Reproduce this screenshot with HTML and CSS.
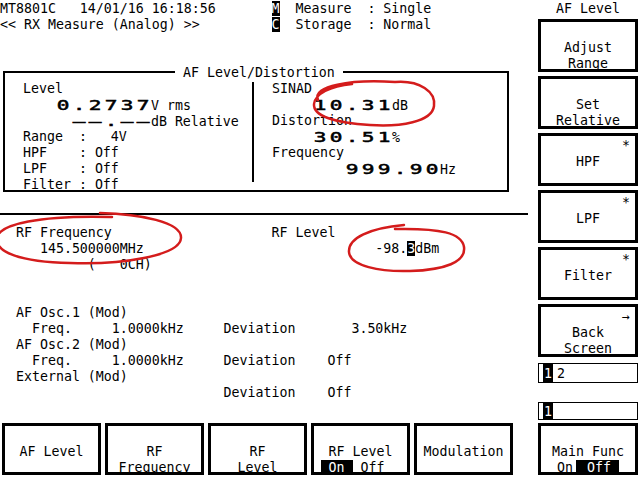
FILE: index.html
```html
<!DOCTYPE html>
<html>
<head>
<meta charset="utf-8">
<link rel="stylesheet" href="styles.css">
</head>
<body>
<div class="screen">
  <div class="main">
    <div class="hdr">
      <div class="line">MT8801C   14/01/16 16:18:56       <span class="inv">M</span>  Measure  : Single</div>
      <div class="line">&lt;&lt; RX Measure (Analog) &gt;&gt;         <span class="inv">C</span>  Storage  : Normal</div>
    </div>
    <fieldset class="box">
      <legend>AF Level/Distortion</legend>
      <div class="afbody">
        <div class="col-l">
          <div class="line">Level</div>
          <div class="line">    <span class="big"><i>0</i><i>.</i><i>2</i><i>7</i><i>3</i><i>7</i></span>V rms</div>
          <div class="line">      <span class="big"><i>—</i><i>—</i><i>.</i><i>—</i><i>—</i></span>dB Relative</div>
          <div class="line">Range  :   4V</div>
          <div class="line">HPF    : Off</div>
          <div class="line">LPF    : Off</div>
          <div class="line">Filter : Off</div>
        </div>
        <div class="vdiv"></div>
        <div class="col-r">
          <div class="line">SINAD</div>
          <div class="line">     <span class="big"><i>1</i><i>0</i><i>.</i><i>3</i><i>1</i></span>dB</div>
          <div class="line">Distortion</div>
          <div class="line">     <span class="big"><i>3</i><i>0</i><i>.</i><i>5</i><i>1</i></span>%</div>
          <div class="line">Frequency</div>
          <div class="line">         <span class="big"><i>9</i><i>9</i><i>9</i><i>.</i><i>9</i><i>0</i></span>Hz</div>
        </div>
      </div>
    </fieldset>
    <div class="rule"></div>
    <div class="rf">
      <div class="line">  RF Frequency                    RF Level</div>
      <div class="line">     145.500000MHz                             -98.<span class="inv">3</span>dBm</div>
      <div class="line">           (   0CH)</div>
    </div>
    <div class="mod">
      <div class="line">  AF Osc.1 (Mod)</div>
      <div class="line">    Freq.     1.0000kHz     Deviation       3.50kHz</div>
      <div class="line">  AF Osc.2 (Mod)</div>
      <div class="line">    Freq.     1.0000kHz     Deviation    Off</div>
      <div class="line">  External (Mod)</div>
      <div class="line">                            Deviation    Off</div>
    </div>
  </div>

  <div class="side">
    <div class="side-title">AF Level</div>
    <div class="btn"><div class="mark"></div><div>Adjust</div><div>Range</div></div>
    <div class="btn"><div class="mark"></div><div>Set</div><div>Relative</div></div>
    <div class="btn"><div class="mark">*</div><div>HPF</div></div>
    <div class="btn"><div class="mark">*</div><div>LPF</div></div>
    <div class="btn"><div class="mark">*</div><div>Filter</div></div>
    <div class="btn"><div class="mark">→</div><div>Back</div><div>Screen</div></div>
    <div class="page page-a"><span class="pg-on">1</span><span class="pg">2</span></div>
    <div class="page page-b"><span class="pg-on">1</span></div>
  </div>

  <div class="bottom-l">
    <div class="btn bbtn"><div class="mark"></div><div>AF Level</div></div>
    <div class="btn bbtn"><div class="mark"></div><div>RF</div><div>Frequency</div></div>
    <div class="btn bbtn"><div class="mark"></div><div>RF</div><div>Level</div></div>
    <div class="btn bbtn"><div class="mark"></div><div>RF Level</div><div class="onoff"><span class="inv"> On </span> Off  </div></div>
    <div class="btn bbtn"><div class="mark"></div><div>Modulation</div></div>
  </div>
  <div class="bottom-r">
    <div class="btn bbtn"><div class="mark"></div><div>Main Func</div><div class="onoff">On<span class="inv off"> Off </span></div></div>
  </div>

  <svg class="marks" width="640" height="480" viewBox="0 0 640 480">
    <path d="M318 100 C312 86, 350 79, 395 82 C420 80, 436 92, 434 106 C432 122, 400 127, 370 125 C335 123, 313 116, 314 104 C315 94, 330 86, 352 84"/>
    <path d="M100 213 C140 214, 182 222, 181 238 C180 256, 120 265, 70 263 C20 262, -5 252, -3 238 C-1 224, 40 215, 112 217"/>
    <path d="M404 225 C370 228, 348 238, 349 252 C350 266, 380 272, 410 271 C445 270, 466 262, 464 247 C462 233, 440 228, 395 229"/>
  </svg>
</div>
</body>
</html>
```
FILE: styles.css
```css
* { box-sizing: border-box; }
html, body { margin: 0; padding: 0; background: #fff; }
body {
  font-family: "DejaVu Sans Mono", monospace;
  font-size: 13.288px;
  line-height: 16px;
  color: #000;
}
.screen {
  position: relative;
  width: 640px;
  height: 480px;
  overflow: hidden;
  display: grid;
  grid-template-columns: 530px 110px;
  grid-template-rows: 423px 57px;
}
.main { grid-column: 1; grid-row: 1; }
.line { height: 16px; line-height: 18px; white-space: pre; }
.inv { background: #000; color: #fff; }

.box {
  margin: 32px 0 0 3px;
  padding: 0;
  border: 2px solid #000;
  width: 506px;
  height: 128px;
  min-width: 0;
}
.box legend {
  margin-left: 170px;
  padding: 0 8px;
  height: 16px;
  line-height: 18px;
}
.afbody { display: flex; height: 110px; }
.col-l { width: 247px; padding-left: 18px; }
.vdiv { width: 2px; height: 100px; margin-top: 2px; background: #000; }
.col-r { flex: 1; padding-left: 18px; }
.big { font-size: 13.6px; }
.big i {
  font-style: normal;
  display: inline-block;
  width: 16px;
  line-height: 13px;
  text-align: center;
  transform: scaleX(1.55);
  -webkit-text-stroke: 0.5px #000;
}
.rule { width: 528px; height: 2px; margin-top: 21px; background: #000; }
.rf { margin-top: 9px; }
.mod { margin-top: 32px; }

.side {
  grid-column: 2;
  grid-row: 1;
  padding-left: 8px;
  display: flex;
  flex-direction: column;
  gap: 4px;
}
.side-title { height: 15px; line-height: 18px; text-align: center; width: 100px; white-space: pre; }
.btn {
  width: 100px;
  height: 53px;
  border: 3px solid #000;
  padding-top: 2px;
  text-align: center;
  white-space: pre;
  flex: none;
  overflow: hidden;
}
.mark { height: 16px; text-align: right; padding-right: 5px; }
.page {
  width: 100px;
  border: 1px solid #000;
  display: flex;
  padding-left: 4px;
  flex: none;
}
.page-a { height: 20px; margin-top: 2px; line-height: 19px; }
.page-b { height: 18px; margin-top: 15px; line-height: 17px; }
.pg-on { background: #000; color: #fff; width: 10px; text-align: center; }
.pg { margin-left: 4px; }

.bottom-l {
  grid-column: 1;
  grid-row: 2;
  display: flex;
  gap: 4px;
  padding-left: 2px;
  align-items: flex-start;
}
.bbtn { width: 99px; height: 52px; }
.bottom-r { grid-column: 2; grid-row: 2; padding-left: 8px; }
.bottom-r .bbtn { width: 100px; }
.off { margin-left: 3px; padding-left: 3px; }

.marks {
  position: absolute;
  left: 0;
  top: 0;
  pointer-events: none;
  fill: none;
  stroke: #d41c1c;
  stroke-width: 2.5;
  stroke-linecap: round;
}
```
